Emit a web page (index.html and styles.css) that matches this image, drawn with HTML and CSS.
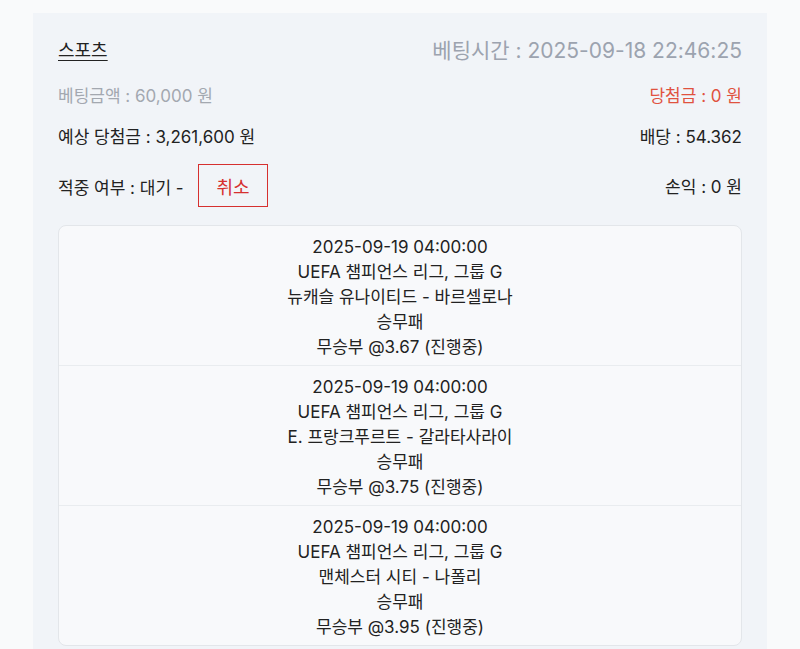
FILE: index.html
```html
<!DOCTYPE html>
<html lang="ko">
<head>
    <meta charset="UTF-8">
    <meta name="viewport" content="width=device-width, initial-scale=1.0">
    <title>베팅 내역</title>
    <link rel="stylesheet" href="styles.css">
</head>
<body>
    <div class="bet-card">
        <div class="row row-top">
            <a class="category">스포츠</a>
            <span class="bet-time">베팅시간 : 2025-09-18 22:46:25</span>
        </div>
        <div class="row row-amount">
            <span class="muted">베팅금액 : 60,000 원</span>
            <span class="win">당첨금 : 0 원</span>
        </div>
        <div class="row">
            <span>예상 당첨금 : 3,261,600 원</span>
            <span>배당 : 54.362</span>
        </div>
        <div class="row row-status">
            <span class="status">적중 여부 : 대기 - <button class="cancel">취소</button></span>
            <span>손익 : 0 원</span>
        </div>

        <ul class="games">
            <li>
                2025-09-19 04:00:00<br>
                UEFA 챔피언스 리그, 그룹 G<br>
                뉴캐슬 유나이티드 - 바르셀로나<br>
                승무패<br>
                무승부 @3.67 (진행중)
            </li>
            <li>
                2025-09-19 04:00:00<br>
                UEFA 챔피언스 리그, 그룹 G<br>
                E. 프랑크푸르트 - 갈라타사라이<br>
                승무패<br>
                무승부 @3.75 (진행중)
            </li>
            <li>
                2025-09-19 04:00:00<br>
                UEFA 챔피언스 리그, 그룹 G<br>
                맨체스터 시티 - 나폴리<br>
                승무패<br>
                무승부 @3.95 (진행중)
            </li>
        </ul>
    </div>
</body>
</html>
```

FILE: styles.css
```css
body {
    margin: 0;
    background: #f9fafb;
    font-family: Inter, 'Noto Sans CJK KR', sans-serif;
    color: #222;
    font-size: 17px;
}
.bet-card {
    margin: 13px 33px 0;
    padding: 21px 25px 40px;
    background: #f1f4f8;
}
.row {
    display: flex;
    justify-content: space-between;
    align-items: center;
    margin-bottom: 16px;
}
.row-top { margin-bottom: 18px; }
.category {
    color: #222;
    font-size: 18px;
    text-decoration: underline;
    text-underline-offset: 3px;
}
.bet-time { color: #9ca3af; font-size: 21px; }
.muted { color: #a3a8b0; }
.win { color: #e0523f; }
.row-status { margin-bottom: 0; }
.cancel {
    margin-left: 10px;
    padding: 0 17px;
    height: 43px;
    background: transparent;
    border: 1px solid #d6302f;
    color: #d6302f;
    font-family: inherit;
    font-size: 18px;
}

.games {
    list-style: none;
    margin: 18px 0 0;
    padding: 0;
    background: #f8f9fb;
    border: 1px solid #e3e6ea;
    border-radius: 8px;
    text-align: center;
}
.games li {
    padding: 9px 0 5px;
    line-height: 25px;
    border-bottom: 1px solid #e9ecef;
}
.games li:last-child { border-bottom: none; }
```
